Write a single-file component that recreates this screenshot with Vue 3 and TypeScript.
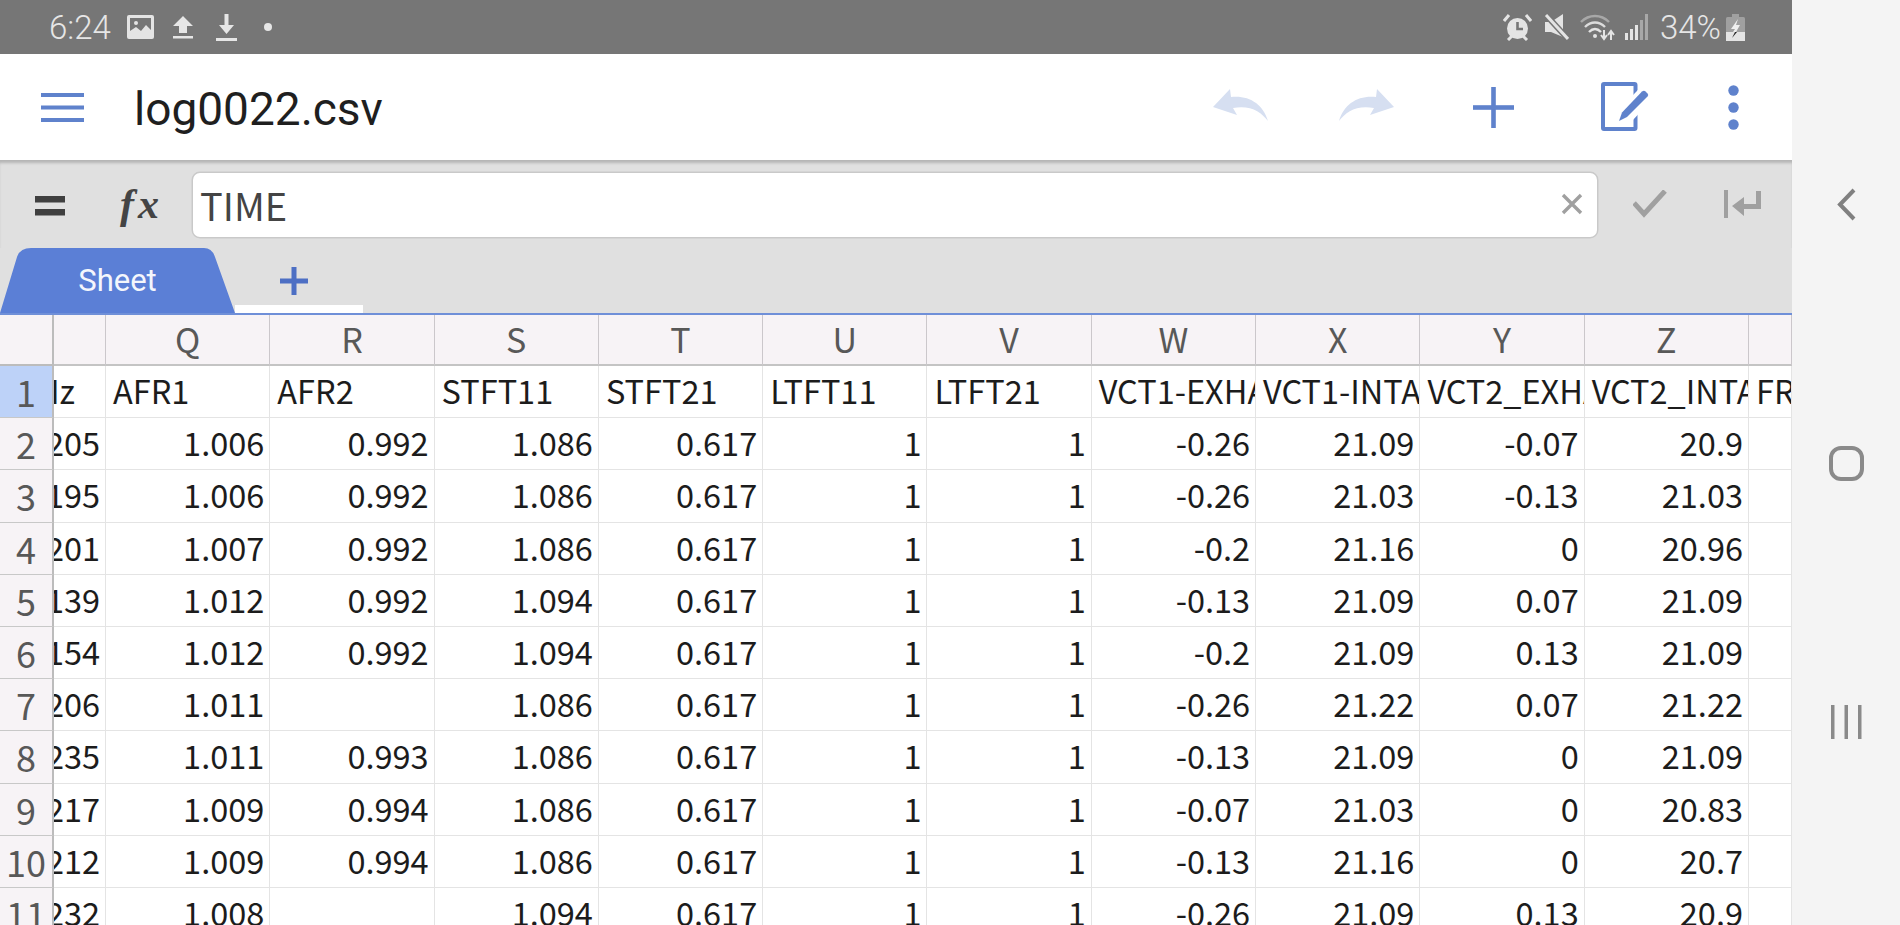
<script setup lang="ts">
const columns: string[] = ['', 'Q', 'R', 'S', 'T', 'U', 'V', 'W', 'X', 'Y', 'Z', '']
const titles: string[] = ['Hz', 'AFR1', 'AFR2', 'STFT11', 'STFT21', 'LTFT11', 'LTFT21', 'VCT1-EXHAUST', 'VCT1-INTAKE', 'VCT2_EXHAUST', 'VCT2_INTAKE', 'FREQ']
const rows: string[][] = [
  ['205', '1.006', '0.992', '1.086', '0.617', '1', '1', '-0.26', '21.09', '-0.07', '20.9', ''],
  ['195', '1.006', '0.992', '1.086', '0.617', '1', '1', '-0.26', '21.03', '-0.13', '21.03', ''],
  ['201', '1.007', '0.992', '1.086', '0.617', '1', '1', '-0.2', '21.16', '0', '20.96', ''],
  ['139', '1.012', '0.992', '1.094', '0.617', '1', '1', '-0.13', '21.09', '0.07', '21.09', ''],
  ['154', '1.012', '0.992', '1.094', '0.617', '1', '1', '-0.2', '21.09', '0.13', '21.09', ''],
  ['206', '1.011', '', '1.086', '0.617', '1', '1', '-0.26', '21.22', '0.07', '21.22', ''],
  ['235', '1.011', '0.993', '1.086', '0.617', '1', '1', '-0.13', '21.09', '0', '21.09', ''],
  ['217', '1.009', '0.994', '1.086', '0.617', '1', '1', '-0.07', '21.03', '0', '20.83', ''],
  ['212', '1.009', '0.994', '1.086', '0.617', '1', '1', '-0.13', '21.16', '0', '20.7', ''],
  ['232', '1.008', '', '1.094', '0.617', '1', '1', '-0.26', '21.09', '0.13', '20.9', ''],
]
</script>

<template>
  <div class="screen">
    <main class="app">
      <header class="status">
        <span class="time">6:24</span>
        <svg class="st-image" width="27" height="24" viewBox="0 0 27 24">
          <rect width="27" height="24" rx="2" fill="#e4e4e4" />
          <rect x="3" y="3" width="21" height="18" fill="#767676" />
          <circle cx="9" cy="8" r="2" fill="#e4e4e4" />
          <path d="M3 21V16L9 12L14 16L19 10L24 15V21Z" fill="#e4e4e4" />
        </svg>
        <svg class="st-up" width="20" height="23" viewBox="0 0 20 23">
          <path d="M10 0L20 10H14V17H6V10H0Z" fill="#e6e6e6" />
          <rect y="20" width="20" height="2.5" fill="#e6e6e6" />
        </svg>
        <svg class="st-down" width="21" height="27" viewBox="0 0 21 27">
          <path d="M8.5 0H12.5V11H18L10.5 20L3 11H8.5Z" fill="#e6e6e6" />
          <rect y="24" width="21" height="3" fill="#e6e6e6" />
        </svg>
        <span class="st-dot"></span>
        <span class="status-gap"></span>
        <svg class="st-alarm" width="29" height="27" viewBox="0 0 29 27">
          <circle cx="14.5" cy="14.5" r="10.5" fill="#e4e4e4" />
          <path d="M14.5 8V15H20" stroke="#767676" stroke-width="2.6" fill="none" />
          <path d="M1 7L6 1M28 7L23 1" stroke="#e4e4e4" stroke-width="3" />
          <path d="M5 26L9 22M24 26L20 22" stroke="#e4e4e4" stroke-width="3" />
        </svg>
        <svg class="st-mute" width="25" height="26" viewBox="0 0 25 26">
          <path d="M1 8H7L19 0V23L7 18H1Z" fill="#e4e4e4" />
          <path d="M2 1L24 25" stroke="#767676" stroke-width="6" />
          <path d="M2 1L24 25" stroke="#e4e4e4" stroke-width="3" />
        </svg>
        <svg class="st-wifi" width="35" height="27" viewBox="0 0 35 27">
          <path d="M1 8C9 0 21 0 29 8" stroke="#a8a8a8" stroke-width="2.4" fill="none" />
          <path d="M5 13C11 7 19 7 25 13" stroke="#dcdcdc" stroke-width="2.4" fill="none" />
          <path d="M9 18C13 14 17 14 21 18" stroke="#e4e4e4" stroke-width="2.4" fill="none" />
          <circle cx="15" cy="22" r="2" fill="#e4e4e4" />
          <path d="M24 16V24M21 21L24 25L27 21" stroke="#e4e4e4" stroke-width="2" fill="none" />
          <path d="M31 26V18M28 21L31 17L34 21" stroke="#e4e4e4" stroke-width="2" fill="none" />
        </svg>
        <svg class="st-signal" width="24" height="26" viewBox="0 0 24 26">
          <rect x="0" y="19" width="3" height="7" fill="#e4e4e4" />
          <rect x="5" y="15" width="3" height="11" fill="#e4e4e4" />
          <rect x="10" y="11" width="3" height="15" fill="#e4e4e4" />
          <rect x="15" y="6" width="3" height="20" fill="#a8a8a8" />
          <rect x="20" y="0" width="3" height="26" fill="#a8a8a8" />
        </svg>
        <span class="percent">34%</span>
        <svg class="st-battery" width="19" height="27" viewBox="0 0 19 27">
          <rect x="6" y="0" width="7" height="3" fill="#a0a0a0" />
          <rect x="0" y="3" width="19" height="24" rx="1.5" fill="#a0a0a0" />
          <rect x="0" y="18" width="19" height="9" fill="#e4e4e4" />
          <path d="M12 5L5 15H9L7 18H10L14 11H10Z" fill="#efefef" />
          <path d="M9 18L6 24L11 18Z" fill="#222" />
        </svg>
      </header>

      <section class="toolbar">
        <svg class="tb-menu" width="43" height="30" viewBox="0 0 43 30">
          <rect y="0" width="43" height="4" fill="#5f82cc" />
          <rect y="12.5" width="43" height="4" fill="#5f82cc" />
          <rect y="25" width="43" height="4" fill="#5f82cc" />
        </svg>
        <h1 class="title">log0022.csv</h1>
        <span class="toolbar-gap"></span>
        <svg class="tb-undo" width="55" height="35" viewBox="0 0 55 35">
          <path d="M0 19L17 1L18 9C36 7 50 16 55 33C48 24 38 17 20 20L24 27Z" fill="#d6dff1" />
        </svg>
        <svg class="tb-redo" width="55" height="35" viewBox="0 0 55 35">
          <path d="M55 19L38 1L37 9C19 7 5 16 0 33C7 24 17 17 35 20L31 27Z" fill="#d6dff1" />
        </svg>
        <svg class="tb-plus" width="41" height="41" viewBox="0 0 41 41">
          <rect x="18.2" y="0" width="4.6" height="41" fill="#5f82cc" />
          <rect x="0" y="18.2" width="41" height="4.6" fill="#5f82cc" />
        </svg>
        <svg class="tb-edit" width="48" height="49" viewBox="0 0 48 49">
          <rect x="2" y="2" width="32.5" height="45" rx="1" fill="none" stroke="#5f82cc" stroke-width="4" />
          <path d="M44 13L22 36" stroke="#fff" stroke-width="17" />
          <path d="M41 9.5Q43 8 44.5 9.5L46.5 11.5Q48 13 46.5 14.5L26 35L18 39L21 30.5Z" fill="#5f82cc" />
        </svg>
        <svg class="tb-more" width="11" height="45" viewBox="0 0 11 45">
          <circle cx="5.5" cy="5.5" r="5.2" fill="#5f82cc" />
          <circle cx="5.5" cy="22.5" r="5.2" fill="#5f82cc" />
          <circle cx="5.5" cy="39.5" r="5.2" fill="#5f82cc" />
        </svg>
      </section>

      <section class="formula">
        <svg class="fm-eq" width="30" height="20" viewBox="0 0 30 20">
          <rect y="0" width="30" height="6.5" fill="#3f3f3f" />
          <rect y="13" width="30" height="6.5" fill="#3f3f3f" />
        </svg>
        <span class="fx">fx</span>
        <div class="input">
          <span class="input-text">TIME</span>
          <svg class="clear" width="22" height="22" viewBox="0 0 22 22">
            <path d="M2 2L20 20M20 2L2 20" stroke="#a0a0a0" stroke-width="3.4" />
          </svg>
        </div>
        <svg class="fm-check" width="34" height="28" viewBox="0 0 34 28">
          <path d="M1 13L11 24L32 1" fill="none" stroke="#a0a0a0" stroke-width="5" />
        </svg>
        <svg class="fm-enter" width="37" height="28" viewBox="0 0 37 28">
          <rect x="0" y="0" width="4" height="28" fill="#a0a0a0" />
          <path d="M32 1H37V19H20V26L8 16L20 7V14H32Z" fill="#a0a0a0" />
        </svg>
      </section>

      <section class="tabs">
        <div class="tab">Sheet</div>
        <div class="add">
          <svg width="28" height="28" viewBox="0 0 28 28">
            <rect x="11.5" y="0" width="5" height="28" fill="#4d6fc4" />
            <rect x="0" y="11.5" width="28" height="5" fill="#4d6fc4" />
          </svg>
        </div>
      </section>

      <section class="grid">
        <div class="corner"></div>
        <div v-for="(c, i) in columns" :key="'h' + i" class="col-head">{{ c }}</div>

        <div class="row-head selected">1</div>
        <div v-for="(t, i) in titles" :key="'t' + i" class="cell title-cell" :class="{ 'cell-clip': i === 0 }">
          <span>{{ t }}</span>
        </div>

        <template v-for="(row, r) in rows" :key="'r' + r">
          <div class="row-head">{{ r + 2 }}</div>
          <div v-for="(v, i) in row" :key="i" class="cell num"><span>{{ v }}</span></div>
        </template>
      </section>
    </main>

    <nav class="nav">
      <svg width="19" height="33" viewBox="0 0 19 33">
        <path d="M17 2L3 16.5L17 31" fill="none" stroke="#808080" stroke-width="4" />
      </svg>
      <svg class="nav-home" width="35" height="35" viewBox="0 0 35 35">
        <rect x="2" y="2" width="31" height="31" rx="10" fill="none" stroke="#8a8a8a" stroke-width="4" />
      </svg>
      <svg class="nav-recent" width="31" height="34" viewBox="0 0 31 34">
        <rect x="0" y="0" width="3.5" height="34" fill="#8a8a8a" />
        <rect x="13.5" y="0" width="3.5" height="34" fill="#8a8a8a" />
        <rect x="27" y="0" width="3.5" height="34" fill="#8a8a8a" />
      </svg>
    </nav>
  </div>
</template>

<style scoped>
.screen {
  width: 1900px;
  height: 925px;
  display: flex;
  overflow: hidden;
  background: #f4f4f4;
  font-family: "Noto Sans CJK JP", "Noto Sans", sans-serif;
}
.app {
  width: 1792px;
  flex: none;
  display: flex;
  flex-direction: column;
  background: #fff;
}

/* status bar */
.status {
  height: 54px;
  flex: none;
  background: #767676;
  display: flex;
  align-items: center;
  padding-left: 49px;
  box-sizing: border-box;
}
.time {
  width: 62px;
  padding-top: 2px;
  font-family: Roboto, sans-serif;
  font-weight: 300;
  font-size: 33px;
  line-height: 52px;
  color: #e6e6e6;
}
.st-image { margin-left: 16px; }
.st-up { margin-left: 19px; }
.st-down { margin-left: 23px; }
.st-dot {
  width: 8px;
  height: 8px;
  border-radius: 50%;
  background: #e6e6e6;
  margin-left: 27px;
}
.status-gap { flex: 1; }
.st-mute { margin-left: 12px; }
.st-wifi { margin-left: 11px; }
.st-signal { margin-left: 10px; }
.percent {
  margin-left: 11px;
  width: 62px;
  padding-top: 2px;
  font-family: Roboto, sans-serif;
  font-weight: 300;
  font-size: 33px;
  line-height: 52px;
  color: #e6e6e6;
}
.st-battery { margin-left: 4px; margin-right: 47px; }

/* toolbar */
.toolbar {
  height: 106px;
  flex: none;
  display: flex;
  align-items: center;
  padding-left: 41px;
  box-sizing: border-box;
}
.tb-menu { margin-top: 1px; }
.title {
  margin: 3px 0 0 50px;
  font-family: Roboto, sans-serif;
  font-weight: 400;
  font-size: 46px;
  color: #1f1f1f;
  line-height: 60px;
}
.toolbar-gap { flex: 1; }
.tb-undo { margin-top: -3px; }
.tb-redo { margin-left: 71px; margin-top: -3px; }
.tb-plus { margin-left: 79px; }
.tb-edit { margin-left: 87px; margin-top: -1px; }
.tb-more { margin-left: 79px; margin-right: 53px; }

/* formula bar */
.formula {
  height: 88px;
  flex: none;
  display: flex;
  align-items: flex-start;
  background: #e0e0e0;
  box-shadow: inset 0 4px 3px -1px #b5b5b5;
  padding-left: 35px;
  box-sizing: border-box;
}
.fm-eq { margin-top: 36px; }
.fx {
  margin-left: 55px;
  width: 48px;
  margin-top: 20px;
  font-family: "Liberation Serif", serif;
  font-style: italic;
  font-weight: 700;
  font-size: 42px;
  line-height: 48px;
  letter-spacing: 4px;
  color: #444;
}
.input {
  margin-left: 25px;
  margin-top: 13px;
  width: 1404px;
  flex: none;
  height: 64px;
  background: #fff;
  border-radius: 7px;
  box-shadow: 0 0 0 1.5px #c9c9c9;
  display: flex;
  align-items: center;
  padding-left: 7px;
  padding-right: 14px;
  box-sizing: border-box;
}
.input-text {
  flex: 1;
  font-size: 38px;
  line-height: 64px;
  color: #444;
}
.clear { margin-top: -2px; }
.fm-check { margin-left: 36px; margin-top: 30px; }
.fm-enter { margin-left: 57px; margin-top: 30px; }

/* tabs */
.tabs {
  height: 67px;
  flex: none;
  display: flex;
  align-items: flex-start;
  background: #e0e0e0;
  border-bottom: 2.5px solid #6f8fd8;
  box-sizing: border-box;
}
.tab {
  width: 235px;
  height: 65px;
  background: #5b7fd6;
  clip-path: path("M0 65L17 9Q20 0 31 0L204 0Q212 0 215 9L235 65Z");
  color: #f4f6fc;
  font-family: Roboto, sans-serif;
  font-size: 31px;
  line-height: 65px;
  text-align: center;
}
.add {
  width: 128px;
  height: 65px;
  border-bottom: 8px solid #fff;
  box-sizing: border-box;
  display: flex;
  justify-content: center;
  align-items: center;
  padding-top: 9px;
  padding-right: 10px;
}

/* grid */
.grid {
  flex: 1;
  min-height: 0;
  overflow: hidden;
  display: grid;
  grid-template-columns: 54px 52px repeat(10, 164.3px) 1fr;
  grid-template-rows: 51px repeat(11, 52.2px);
  background: #fff;
}
.corner, .col-head, .row-head {
  background: #f7f3f6;
  color: #585858;
  box-sizing: border-box;
}
.corner {
  border-right: 2px solid #bcbcbc;
  border-bottom: 2px solid #bcbcbc;
}
.col-head {
  border-right: 1.5px solid #cbc7cb;
  border-bottom: 2px solid #c4c4c4;
  font-size: 34px;
  line-height: 47px;
  text-align: center;
}
.row-head {
  border-right: 2px solid #bcbcbc;
  border-bottom: 1.5px solid #c8c8c8;
  font-size: 36px;
  line-height: 50px;
  text-align: center;
  overflow: hidden;
  white-space: nowrap;
}
.row-head.selected { background: #bdd2f8; }
.cell {
  display: flex;
  align-items: center;
  overflow: hidden;
  white-space: nowrap;
  border-right: 1.5px solid #e4e4e4;
  border-bottom: 1.5px solid #e4e4e4;
  box-sizing: border-box;
  padding: 0 5px 4px 6px;
  font-size: 32.5px;
  color: #1c1c1c;
}
.cell span { flex: none; }
.title-cell { padding-left: 7px; padding-bottom: 5px; }
.cell.num { justify-content: flex-end; }
.cell-clip { justify-content: flex-end; padding-right: 30px; }

/* navigation */
.nav {
  flex: 1;
  display: flex;
  flex-direction: column;
  align-items: center;
  padding-top: 188px;
  box-sizing: border-box;
  background: #f4f4f4;
}
.nav-home { margin-top: 225px; }
.nav-recent { margin-top: 224px; }
</style>
